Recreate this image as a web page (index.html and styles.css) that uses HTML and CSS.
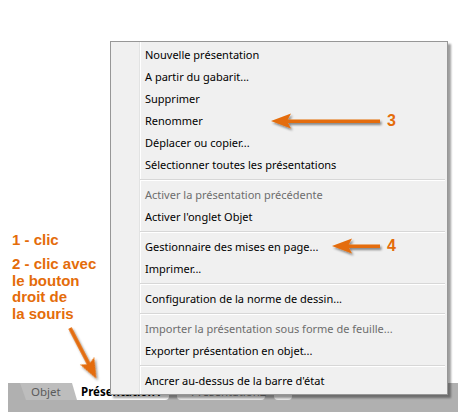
FILE: index.html
```html
<!DOCTYPE html>
<html lang="fr">
<head>
<meta charset="utf-8">
<title>Menu présentation</title>
<link rel="stylesheet" href="styles.css">
</head>
<body>
<div class="screen">
  <div class="canvas"></div>
  <div class="tabbar">
    <div class="tab tab-model">Objet</div>
    <div class="tab tab-active">Présentation1</div>
    <div class="tab tab-other">Présentation2</div>
    <div class="tab tab-plus"></div>
  </div>

  <div class="notes">
    <div class="note note-1">1 - clic</div>
    <div class="note note-2">2 - clic avec<br>le bouton<br>droit de<br>la souris</div>
  </div>

  <div class="menu">
    <div class="item">Nouvelle présentation</div>
    <div class="item">A partir du gabarit...</div>
    <div class="item">Supprimer</div>
    <div class="item">Renommer</div>
    <div class="item">Déplacer ou copier...</div>
    <div class="item">Sélectionner toutes les présentations</div>
    <div class="sep"></div>
    <div class="item disabled">Activer la présentation précédente</div>
    <div class="item">Activer l'onglet Objet</div>
    <div class="sep"></div>
    <div class="item">Gestionnaire des mises en page...</div>
    <div class="item">Imprimer...</div>
    <div class="sep"></div>
    <div class="item">Configuration de la norme de dessin...</div>
    <div class="sep"></div>
    <div class="item disabled">Importer la présentation sous forme de feuille...</div>
    <div class="item">Exporter présentation en objet...</div>
    <div class="sep"></div>
    <div class="item">Ancrer au-dessus de la barre d'état</div>
  </div>

  <svg class="arrows" width="468" height="420" viewBox="0 0 468 420">
    <defs>
      <filter id="sh" x="-20%" y="-50%" width="150%" height="250%">
        <feDropShadow dx="1.5" dy="2" stdDeviation="1.2" flood-color="#000" flood-opacity="0.45"/>
      </filter>
    </defs>
    <g fill="#e46c0a" stroke="none" filter="url(#sh)">
      <rect x="284" y="119.5" width="96" height="3.5"/>
      <polygon points="271,121 291,113.5 287,121 291,128.5"/>
      <rect x="345" y="244.5" width="35" height="3.5"/>
      <polygon points="332,246 352,238.5 348,246 352,253.5"/>
      <g transform="translate(70,328) rotate(62.5)">
        <rect x="0" y="-1.8" width="42" height="3.6"/>
        <polygon points="57,0 37,-8 41,0 37,8"/>
      </g>
    </g>
  </svg>
  <div class="num num-3">3</div>
  <div class="num num-4">4</div>
</div>
</body>
</html>
```

FILE: styles.css
```css
html, body {
  margin: 0;
  padding: 0;
  background: #ffffff;
}

.screen {
  position: relative;
  width: 468px;
  height: 420px;
  overflow: hidden;
  font-family: "Noto Sans", "Open Sans", sans-serif;
}

.canvas {
  height: 383px;
}

.tabbar {
  margin: 0 10px 0 8px;
  height: 29px;
  background: #b0b0b0;
  display: flex;
  align-items: flex-start;
  padding-left: 12px;
  font-size: 11.5px;
}

.tab {
  height: 17px;
  line-height: 17px;
  white-space: nowrap;
}

.tab-model {
  width: 58px;
  padding-left: 11px;
  box-sizing: border-box;
  color: #5b5b5b;
  background: #bdbdbd;
  clip-path: polygon(0 0, 100% 0, 100% 100%, 6px 100%);
}

.tab-active {
  width: 97px;
  margin-left: -6px;
  padding-left: 9px;
  box-sizing: border-box;
  background: #ffffff;
  font-weight: bold;
  color: #000;
  clip-path: polygon(0 0, 100% 0, 100% 100%, 5px 100%);
  border-bottom-right-radius: 4px;
}

.tab-other {
  width: 88px;
  margin-left: 8px;
  padding-left: 14px;
  box-sizing: border-box;
  background: #e8e8e8;
  color: #777;
  border-radius: 0 0 4px 4px;
}

.tab-plus {
  width: 18px;
  margin-left: 9px;
  background: #e8e8e8;
  border-radius: 0 0 4px 4px;
}

.notes {
  position: absolute;
  left: 12px;
  top: 231px;
  font-family: "Liberation Sans", Arial, sans-serif;
  font-weight: bold;
  font-size: 15px;
  color: #e46c0a;
}

.note-1 {
  line-height: 17px;
}

.note-2 {
  margin-top: 8px;
  line-height: 16.6px;
}

.menu {
  position: absolute;
  left: 110px;
  top: 41px;
  width: 336px;
  padding: 2px 0 2px 0;
  border: 1px solid #979797;
  background:
    linear-gradient(to right,
      transparent 28px, #e2e3e3 28px, #e2e3e3 29px,
      #ffffff 29px, #ffffff 30px, transparent 30px),
    #f0f0f0;
  box-shadow: 3px 3px 2px rgba(0, 0, 0, 0.38);
  font-size: 11px;
  color: #000;
  z-index: 2;
}

.item {
  height: 22px;
  line-height: 22px;
  padding-left: 34px;
  white-space: nowrap;
}

.item.disabled {
  color: #6d6d6d;
}

.sep {
  height: 8px;
  margin: 0 2px 0 29px;
  box-sizing: border-box;
  padding-top: 3px;
}

.sep::before {
  content: "";
  display: block;
  height: 1px;
  background: #d7d7d7;
  border-bottom: 1px solid #ffffff;
}

.arrows {
  position: absolute;
  left: 0;
  top: 0;
  z-index: 3;
  pointer-events: none;
}

.num {
  position: absolute;
  font-family: "Liberation Sans", Arial, sans-serif;
  font-weight: bold;
  font-size: 16px;
  line-height: 16px;
  color: #e46c0a;
  z-index: 3;
}

.num-3 {
  left: 387px;
  top: 113px;
}

.num-4 {
  left: 387px;
  top: 238px;
}
```
